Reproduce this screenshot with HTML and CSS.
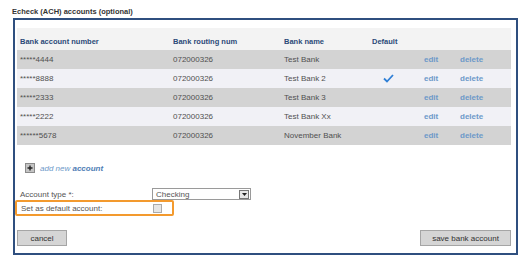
FILE: index.html
```html
<!DOCTYPE html>
<html lang="en">
<head>
    <meta charset="UTF-8">
    <title>Echeck accounts</title>
    <link rel="stylesheet" href="styles.css">
</head>
<body>
    <div class="section-title">Echeck (ACH) accounts (optional)</div>
    <div class="panel">
        <table class="accounts">
            <tr class="head">
                <th class="c-num">Bank account number</th>
                <th class="c-route">Bank routing num</th>
                <th class="c-name">Bank name</th>
                <th class="c-def">Default</th>
                <th class="c-edit"></th>
                <th class="c-del"></th>
            </tr>
            <tr class="odd">
                <td>*****4444</td><td>072000326</td><td>Test Bank</td><td></td>
                <td><a href="#">edit</a></td><td><a href="#">delete</a></td>
            </tr>
            <tr class="even">
                <td>*****8888</td><td>072000326</td><td>Test Bank 2</td>
                <td class="check">
                    <svg width="11" height="9" viewBox="0 0 11 9"><path d="M1 4.5 L4 7.5 L10 1" fill="none" stroke="#2f7fd6" stroke-width="1.8"/></svg>
                </td>
                <td><a href="#">edit</a></td><td><a href="#">delete</a></td>
            </tr>
            <tr class="odd">
                <td>*****2333</td><td>072000326</td><td>Test Bank 3</td><td></td>
                <td><a href="#">edit</a></td><td><a href="#">delete</a></td>
            </tr>
            <tr class="even">
                <td>*****2222</td><td>072000326</td><td>Test Bank Xx</td><td></td>
                <td><a href="#">edit</a></td><td><a href="#">delete</a></td>
            </tr>
            <tr class="odd">
                <td>******5678</td><td>072000326</td><td>November Bank</td><td></td>
                <td><a href="#">edit</a></td><td><a href="#">delete</a></td>
            </tr>
        </table>

        <div class="add-new">
            <span class="plus-box">
                <svg width="8" height="8" viewBox="0 0 8 8"><path d="M4 1.5 V6.5 M1.5 4 H6.5" stroke="#222" stroke-width="1.4"/></svg>
            </span>
            <a href="#">add new <b>account</b></a>
        </div>

        <div class="form-row type-row">
            <label class="form-label">Account type *:</label>
            <div class="select">
                <span>Checking</span>
                <span class="select-btn">
                    <svg width="5" height="3" viewBox="0 0 5 3"><path d="M0 0 H5 L2.5 3 Z" fill="#222"/></svg>
                </span>
            </div>
        </div>
        <div class="form-row highlight">
            <label class="form-label">Set as default account:</label>
            <span class="checkbox"></span>
        </div>

        <div class="buttons">
            <button class="btn btn-cancel">cancel</button>
            <button class="btn btn-save">save bank account</button>
        </div>
    </div>
</body>
</html>
```
FILE: styles.css
```css
body {
    margin: 0;
    padding: 7px 13px 0 13px;
    font-family: "Liberation Sans", Arial, sans-serif;
    font-size: 8px;
    color: #555555;
    background: #ffffff;
}
.section-title {
    font-size: 7.5px;
    font-weight: bold;
    color: #333333;
    margin-left: -1px;
    height: 11px;
}
.panel {
    width: 497px;
    height: 225px;
    border: 2px solid #2f4f7f;
    padding: 8px 2px 0 2px;
}
.accounts {
    width: 494px;
    border-collapse: collapse;
    table-layout: fixed;
}
.accounts th {
    text-align: left;
    font-size: 7.5px;
    font-weight: bold;
    color: #2b4a78;
    background: #f3f3f3;
    height: 22px;
    padding: 4px 0 0 3px;
    box-sizing: border-box;
}
.accounts td {
    height: 19px;
    padding: 0 0 0 3px;
    color: #505050;
}
.c-num { width: 153px; }
.c-route { width: 111px; }
.c-name { width: 88px; }
.c-def { width: 52px; }
.c-edit { width: 36px; }
.odd td { background: #d3d3d3; }
.even td { background: #f1f1f6; }
.accounts a {
    color: #6d99c9;
    text-decoration: none;
    font-weight: bold;
}
.check {
    padding-left: 14px !important;
}
.check svg {
    display: block;
}
.add-new {
    display: flex;
    align-items: center;
    gap: 5px;
    margin: 17px 0 0 8px;
    height: 12px;
}
.plus-box {
    width: 8px;
    height: 8px;
    border: 1px solid #8a8a8a;
    background: #c4c4c4;
}
.plus-box svg {
    display: block;
}
.add-new a {
    color: #6d99c9;
    font-style: italic;
    text-decoration: none;
}
.add-new b {
    color: #4f7db5;
}
.form-row {
    display: flex;
    align-items: center;
    height: 15px;
    padding-left: 3px;
}
.type-row {
    margin-top: 14px;
    height: 12px;
}
.form-label {
    width: 132px;
    color: #555555;
}
.select {
    width: 94px;
    height: 10px;
    border: 1px solid #9a9a9a;
    display: flex;
    align-items: center;
    justify-content: space-between;
    padding-left: 3px;
    color: #555555;
}
.select-btn {
    width: 8px;
    height: 7px;
    border: 1px solid #777;
    background: #e8e8e8;
    margin-right: 1px;
    display: flex;
    align-items: center;
    justify-content: center;
}
.select-btn svg {
    display: block;
}
.highlight {
    margin-left: -2px;
    width: 151px;
    padding-left: 4px;
    border: 2px solid #f39a2e;
    border-radius: 2px;
    height: 12px;
}
.checkbox {
    width: 7px;
    height: 7px;
    border: 1px solid #aaaaaa;
    background: #e6e6e6;
}
.buttons {
    display: flex;
    justify-content: space-between;
    width: 494px;
    margin-top: 14px;
}
.btn {
    font-family: "Liberation Sans", Arial, sans-serif;
    font-size: 8px;
    color: #333333;
    background: #d5d5d5;
    border: 1px solid #a5a5a5;
    height: 16px;
    padding: 0;
    margin: 0;
}
.btn-cancel {
    width: 50px;
}
.btn-save {
    width: 91px;
}
```
